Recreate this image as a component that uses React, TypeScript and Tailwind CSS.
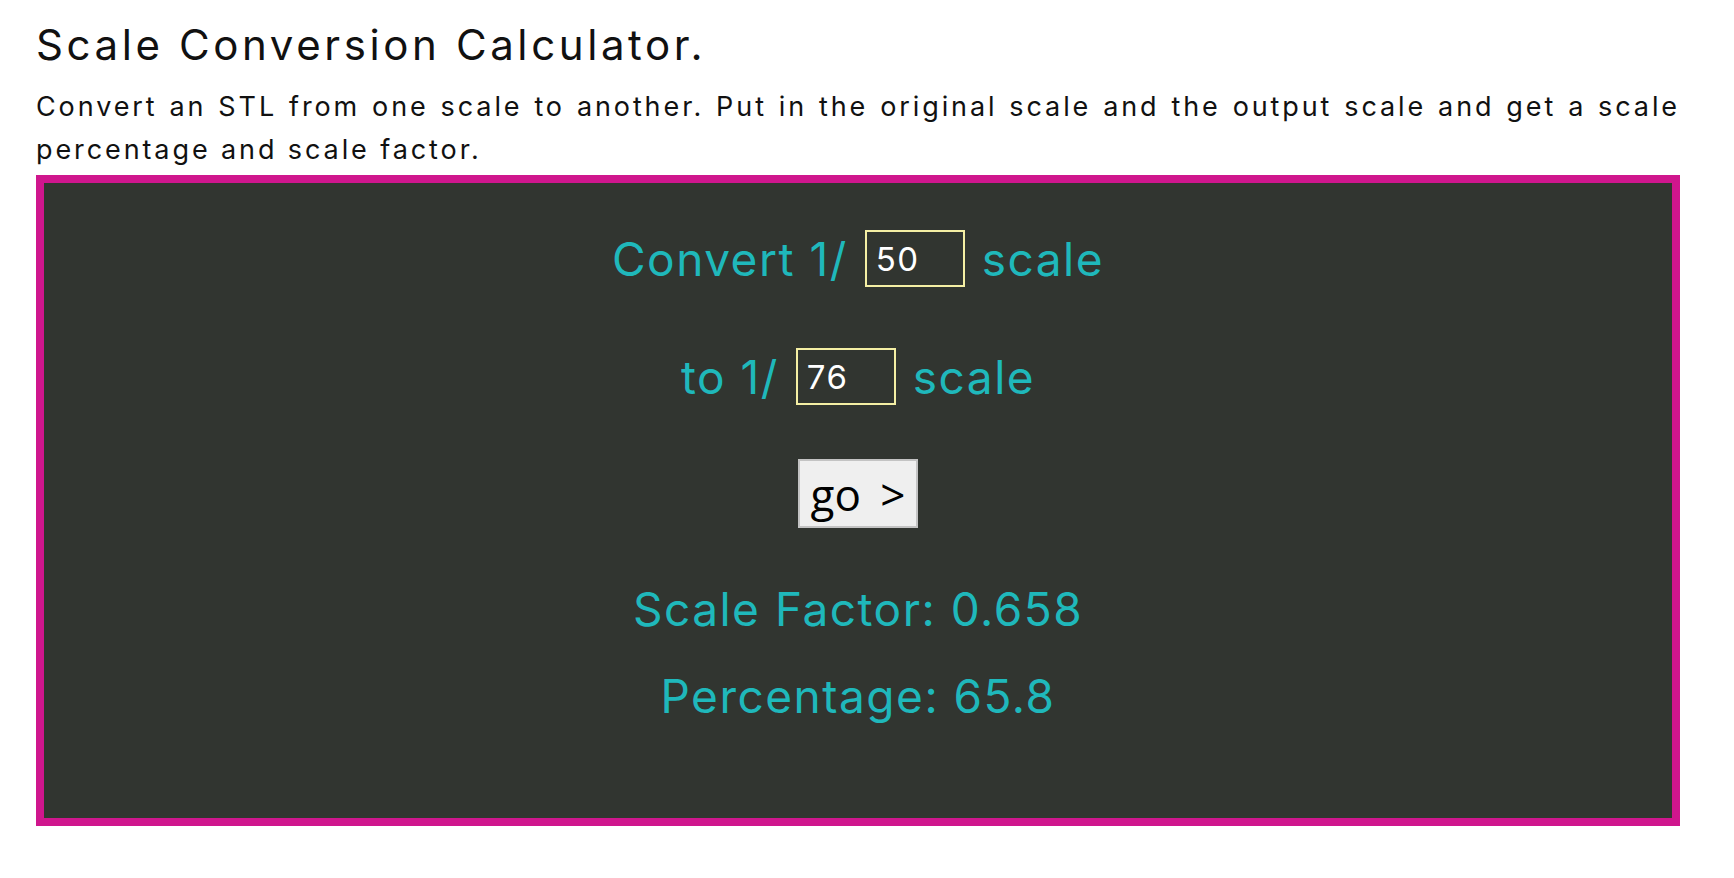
import React from "react";

export default function App() {
  return (
    <div className="min-h-[878px] w-[1734px] bg-white font-['Inter',_sans-serif] text-[#111]">
      <div className="ml-[36px] w-[1644px]">
        <h1 className="pt-[24px] text-[42px] leading-[42px] font-normal tracking-[3.6px]">
          Scale Conversion Calculator.
        </h1>
        <div className="mt-[19px] text-[27px] leading-[43px] tracking-[2.9px]">
          <p className="whitespace-nowrap [text-align-last:justify] text-justify">
            Convert an STL from one scale to another. Put in the original scale and the output scale and get a scale
          </p>
          <p>percentage and scale factor.</p>
        </div>
        <div className="mt-[4px] border-[8px] border-[#cf168d] bg-[#313530]">
          <div className="flex flex-col items-center pt-[47px] pb-[99px] text-[46px] leading-[46px] text-[#1fb8bb] tracking-[1.5px]">
            <div className="flex h-[57px] items-center gap-[17px]">
              <span>Convert 1/</span>
              <input
                readOnly
                value="50"
                className="h-[57px] w-[100px] border-2 border-[#f4efa4] bg-transparent pl-[9px] font-['Inter',_sans-serif] text-[33px] tracking-[1.5px] text-white outline-none"
              />
              <span>scale</span>
            </div>
            <div className="mt-[61px] flex h-[57px] items-center gap-[17px]">
              <span>to 1/</span>
              <input
                readOnly
                value="76"
                className="h-[57px] w-[100px] border-2 border-[#f4efa4] bg-transparent pl-[9px] font-['Inter',_sans-serif] text-[33px] tracking-[1.5px] text-white outline-none"
              />
              <span>scale</span>
            </div>
            <button className="mt-[54px] h-[69px] w-[120px] border-2 border-[#c3c3c3] bg-[#efefef] font-['Open_Sans',_sans-serif] text-[44px] leading-none tracking-normal [word-spacing:8px] text-black">
              go &gt;
            </button>
            <div className="mt-[58px]">Scale Factor: 0.658</div>
            <div className="mt-[41px]">Percentage: 65.8</div>
          </div>
        </div>
      </div>
    </div>
  );
}
